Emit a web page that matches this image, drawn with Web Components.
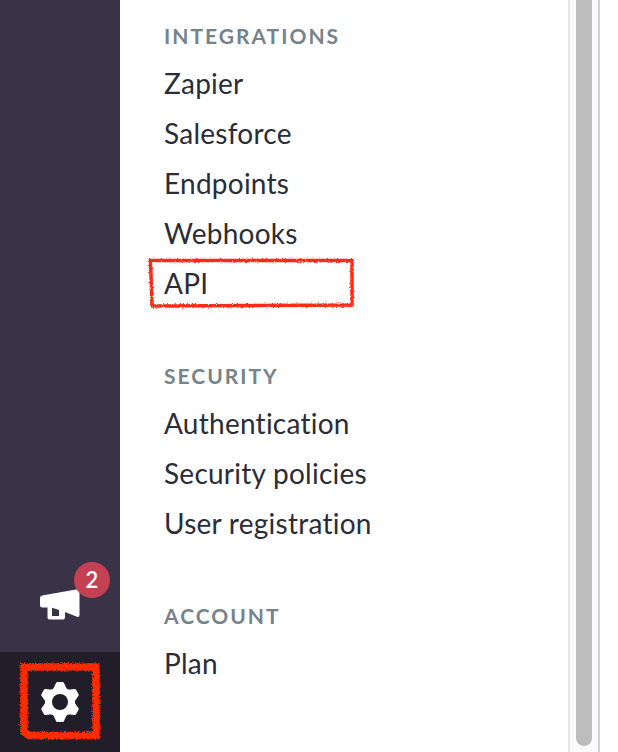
<!DOCTYPE html>
<html>
<head>
<meta charset="utf-8">
<title>Settings</title>
<style>
  html, body { margin: 0; height: 100%; background: #fff; }
  body { overflow: hidden; }
</style>
</head>
<body>
<settings-page></settings-page>

<script>
// Sidebar with the notification and settings buttons
class SideRail extends HTMLElement {
    constructor() {
        super();
        this.attachShadow({ mode: 'open' });
        this.shadowRoot.innerHTML = `
            <style>
                :host {
                    display: flex;
                    flex-direction: column;
                    justify-content: flex-end;
                    width: 120px;
                    height: 752px;
                    background: #3a3247;
                    flex: none;
                }
                .news {
                    height: 100px;
                    position: relative;
                }
                .news svg { position: absolute; left: 40px; top: 37px; }
                .badge {
                    position: absolute;
                    left: 74px;
                    top: 10px;
                    width: 36px;
                    height: 36px;
                    border-radius: 50%;
                    background: #c44153;
                    color: #fff;
                    font: 600 22px/36px "Lato", sans-serif;
                    text-align: center;
                }
                .gear {
                    height: 100px;
                    background: #211d29;
                    display: flex;
                    align-items: center;
                    justify-content: center;
                }
                .gear svg { display: block; }
            </style>
            <div class="news">
                <svg width="40" height="32" viewBox="0 0 40 32">
                    <path fill="#fff" fill-rule="evenodd" d="M2 6.500 L36 .5 Q39.500 0 39.500 3 V26 Q39.500 28.500 37 27.800 L25 23 V28.500 Q25 30.500 23 30.500 H9.500 Q7.500 30.500 7.500 28.500 V18.500 H2.500 Q0 18.500 0 16 V9 Q0 7 2 6.500 Z M12 18.800 V27 H19 V21 Z"/>
                </svg>
                <span class="badge">2</span>
            </div>
            <div class="gear">
                <svg width="40" height="40" viewBox="-20 -20 40 40">
                    <g fill="#fff" stroke="#fff" stroke-width="3" stroke-linejoin="round">
                        <polygon points="-5.500,-12 -2.500,-18.500 2.500,-18.500 5.500,-12"/>
                        <polygon points="-5.500,-12 -2.500,-18.500 2.500,-18.500 5.500,-12" transform="rotate(60)"/>
                        <polygon points="-5.500,-12 -2.500,-18.500 2.500,-18.500 5.500,-12" transform="rotate(120)"/>
                        <polygon points="-5.500,-12 -2.500,-18.500 2.500,-18.500 5.500,-12" transform="rotate(180)"/>
                        <polygon points="-5.500,-12 -2.500,-18.500 2.500,-18.500 5.500,-12" transform="rotate(240)"/>
                        <polygon points="-5.500,-12 -2.500,-18.500 2.500,-18.500 5.500,-12" transform="rotate(300)"/>
                        <circle r="13.500"/>
                    </g>
                    <circle r="8" fill="#211d29"/>
                </svg>
            </div>
        `;
    }
}

// One titled block of links
class NavGroup extends HTMLElement {
    constructor() {
        super();
        this.attachShadow({ mode: 'open' });
        this.shadowRoot.innerHTML = `
            <style>
                :host { display: block; margin-bottom: 40px; }
                h3 {
                    margin: 0 0 7px;
                    height: 30px;
                    font: 700 21px/30px "Lato", sans-serif;
                    letter-spacing: 2px;
                    color: #76838b;
                    text-transform: uppercase;
                }
            </style>
            <h3></h3>
            <slot></slot>
        `;
    }

    connectedCallback() {
        this.shadowRoot.querySelector('h3').textContent = this.getAttribute('title');
    }
}

class NavLink extends HTMLElement {
    constructor() {
        super();
        this.attachShadow({ mode: 'open' });
        this.shadowRoot.innerHTML = `
            <style>
                :host {
                    display: block;
                    height: 50px;
                    font: 400 28px/50px "Lato", sans-serif;
                    letter-spacing: .25px;
                    color: #2a2d38;
                    white-space: nowrap;
                }
            </style>
            <slot></slot>
        `;
    }
}

// The scrollbar track and thumb at the right of the panel
class ScrollTrack extends HTMLElement {
    constructor() {
        super();
        this.attachShadow({ mode: 'open' });
        this.shadowRoot.innerHTML = `
            <style>
                :host {
                    display: block;
                    box-sizing: border-box;
                    width: 32px;
                    height: 752px;
                    flex: none;
                    margin-right: 18px;
                    padding: 0 6px;
                    background: #fafafa;
                    border-left: 2px solid #e6e6e6;
                    border-right: 2px solid #ced2d6;
                }
                div {
                    height: 746px;
                    width: 16px;
                    background: #bdbdbd;
                    border-radius: 0 0 8px 8px;
                }
            </style>
            <div></div>
        `;
    }
}

// Hand drawn red marks on top of the screenshot
class RedMarks extends HTMLElement {
    constructor() {
        super();
        this.attachShadow({ mode: 'open' });
        this.shadowRoot.innerHTML = `
            <style>
                :host { position: absolute; left: 0; top: 0; pointer-events: none; }
                svg { display: block; }
            </style>
            <svg width="618" height="752" viewBox="0 0 618 752">
                <defs>
                    <filter id="rough" x="-10%" y="-10%" width="120%" height="120%">
                        <feTurbulence type="fractalNoise" baseFrequency="0.8" numOctaves="2" seed="4"/>
                        <feDisplacementMap in="SourceGraphic" scale="3"/>
                    </filter>
                    <filter id="rougher" x="-10%" y="-10%" width="120%" height="120%">
                        <feTurbulence type="fractalNoise" baseFrequency="0.9" numOctaves="3" seed="7"/>
                        <feDisplacementMap in="SourceGraphic" scale="5"/>
                    </filter>
                </defs>
                <path fill="none" stroke="#ff2a12" stroke-width="3.500" filter="url(#rough)" d="M150.500 260.500 L352 260.500 L352 305 L152 306 Z"/>
                <path fill="none" stroke="#fe2a05" stroke-width="7.500" filter="url(#rougher)" d="M24 667 L96 667 L96 735.500 L29.500 735.500 L24 732 Z"/>
            </svg>
        `;
    }
}

class SettingsPage extends HTMLElement {
    constructor() {
        super();
        this.attachShadow({ mode: 'open' });
        this.shadowRoot.innerHTML = `
            <style>
                :host {
                    display: flex;
                    position: relative;
                    width: 618px;
                    height: 752px;
                    overflow: hidden;
                    background: #fff;
                }
                .list {
                    flex: 1;
                    padding: 21px 0 0 44px;
                }
                .list nav-group { margin-bottom: 53px; }
            </style>
            <side-rail></side-rail>
            <div class="list">
                <nav-group title="Integrations">
                    <nav-link>Zapier</nav-link>
                    <nav-link>Salesforce</nav-link>
                    <nav-link>Endpoints</nav-link>
                    <nav-link>Webhooks</nav-link>
                    <nav-link>API</nav-link>
                </nav-group>
                <nav-group title="Security">
                    <nav-link>Authentication</nav-link>
                    <nav-link>Security policies</nav-link>
                    <nav-link>User registration</nav-link>
                </nav-group>
                <nav-group title="Account">
                    <nav-link>Plan</nav-link>
                </nav-group>
            </div>
            <scroll-track></scroll-track>
            <red-marks></red-marks>
        `;
    }
}

customElements.define('side-rail', SideRail);
customElements.define('nav-group', NavGroup);
customElements.define('nav-link', NavLink);
customElements.define('scroll-track', ScrollTrack);
customElements.define('red-marks', RedMarks);
customElements.define('settings-page', SettingsPage);
</script>
</body>
</html>
